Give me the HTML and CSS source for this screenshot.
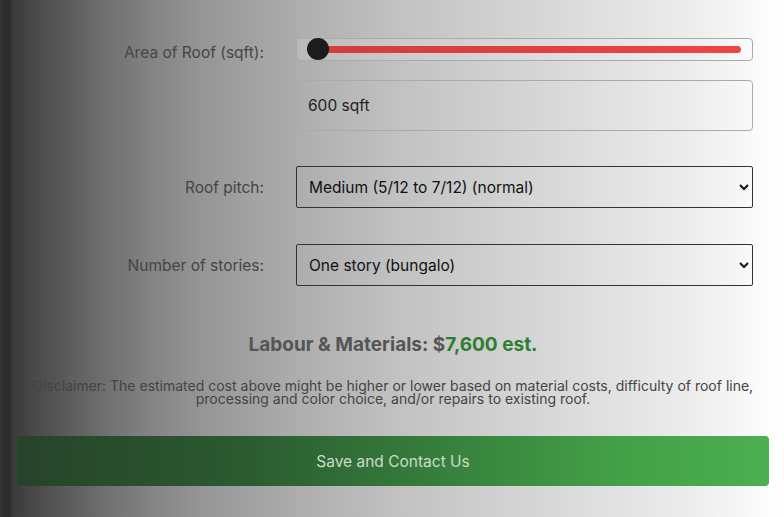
FILE: index.html
```html
<!DOCTYPE html>
<html lang="en">
<head>
    <meta charset="UTF-8">
    <meta name="viewport" content="width=device-width, initial-scale=1.0">
    <title>Roof Estimate</title>
    <link rel="stylesheet" href="styles.css">
</head>
<body>
    <div class="calculator">
        <div class="form-row row-slider">
            <label class="field-label label-area" for="area">Area of Roof (sqft):</label>
            <div class="slider-box">
                <input type="range" id="area" class="slider" min="600" max="5000" step="50" value="600">
            </div>
        </div>

        <div class="form-row row-text">
            <div></div>
            <input type="text" class="text-field" id="areaText" value="600 sqft">
        </div>

        <div class="form-row row-pitch">
            <label class="field-label" for="pitch">Roof pitch:</label>
            <select id="pitch" class="select-field">
                <option>Medium (5/12 to 7/12) (normal)</option>
                <option>Low (under 5/12)</option>
                <option>Steep (over 7/12)</option>
            </select>
        </div>

        <div class="form-row row-stories">
            <label class="field-label" for="stories">Number of stories:</label>
            <select id="stories" class="select-field">
                <option>One story (bungalo)</option>
                <option>Two stories</option>
                <option>Three stories</option>
            </select>
        </div>

        <h3 class="total">Labour &amp; Materials: $<span class="price">7,600 est.</span></h3>

        <p class="disclaimer">Disclaimer: The estimated cost above might be higher or lower based on material costs, difficulty of roof line, processing and color choice, and/or repairs to existing roof.</p>

        <button class="save-btn">Save and Contact Us</button>
    </div>
</body>
</html>
```

FILE: styles.css
```css
body {
    font-family: 'Inter', 'Noto Sans', sans-serif;
    margin: 0;
    height: 517px;
    overflow: hidden;
    background: linear-gradient(90deg, #363636 0px, #2e2e2e 4px, #2c2c2c 9px, #3a3a3a 13px, #474747 30px, #575757 60px, #6d6d6d 100px, #838383 150px, #959595 200px, #aeaeae 300px, #c2c2c2 400px, #d8d8d8 550px, #eeeeee 700px, #fbfbfb 760px, #ffffff 784px);
    color: #222;
}
.calculator {
    margin: 0 15px 0 17px;
    padding-top: 38px;
}
.form-row {
    display: grid;
    grid-template-columns: 247px 457px;
    column-gap: 32px;
    align-items: center;
}
.row-text {
    margin-top: 19px;
}
.row-pitch {
    margin-top: 35px;
}
.row-stories {
    margin-top: 36px;
}
.field-label {
    text-align: right;
    font-size: 15.5px;
    color: #454545;
}
.label-area {
    padding-top: 6px;
    line-height: 17px;
}
.slider-box {
    height: 23px;
    box-sizing: border-box;
    border: 1px solid #aaa;
    border-radius: 4px;
    padding: 0 11px 0 10px;
    background: rgba(255, 255, 255, 0.15);
    display: flex;
    align-items: center;
}
.slider {
    -webkit-appearance: none;
    appearance: none;
    width: 100%;
    height: 21px;
    margin: 0;
    background: transparent;
}
.slider::-webkit-slider-runnable-track {
    height: 7px;
    border-radius: 4px;
    background: linear-gradient(90deg, #d13c3c, #ef4444);
}
.slider::-webkit-slider-thumb {
    -webkit-appearance: none;
    width: 22px;
    height: 22px;
    margin-top: -8px;
    border-radius: 50%;
    background: #1c1c1e;
}
.text-field {
    height: 51px;
    box-sizing: border-box;
    border: 1px solid #aaa;
    border-radius: 4px;
    padding: 0 11px;
    font-family: inherit;
    font-size: 15.5px;
    color: #222;
    background: transparent;
}
.select-field {
    height: 42px;
    box-sizing: border-box;
    border: 1px solid #333;
    border-radius: 2px;
    padding: 0 8px;
    font-family: inherit;
    font-size: 15.5px;
    color: #111;
    background: transparent;
}
.total {
    text-align: center;
    font-size: 19px;
    line-height: 23px;
    font-weight: 700;
    color: #555;
    margin: 47px 0 0 0;
}
.price {
    color: #2e7d32;
}
.disclaimer {
    text-align: center;
    font-size: 14px;
    line-height: 13px;
    color: #444;
    margin: 23px 0 0 0;
}
.save-btn {
    display: block;
    width: 752px;
    height: 50px;
    margin-top: 31px;
    border: none;
    border-radius: 4px;
    background: linear-gradient(90deg, #27432a 0%, #2b5a30 30%, #367d3c 55%, #43a047 80%, #4caf50 100%);
    color: #cadccb;
    font-family: inherit;
    font-size: 15.5px;
}
```
